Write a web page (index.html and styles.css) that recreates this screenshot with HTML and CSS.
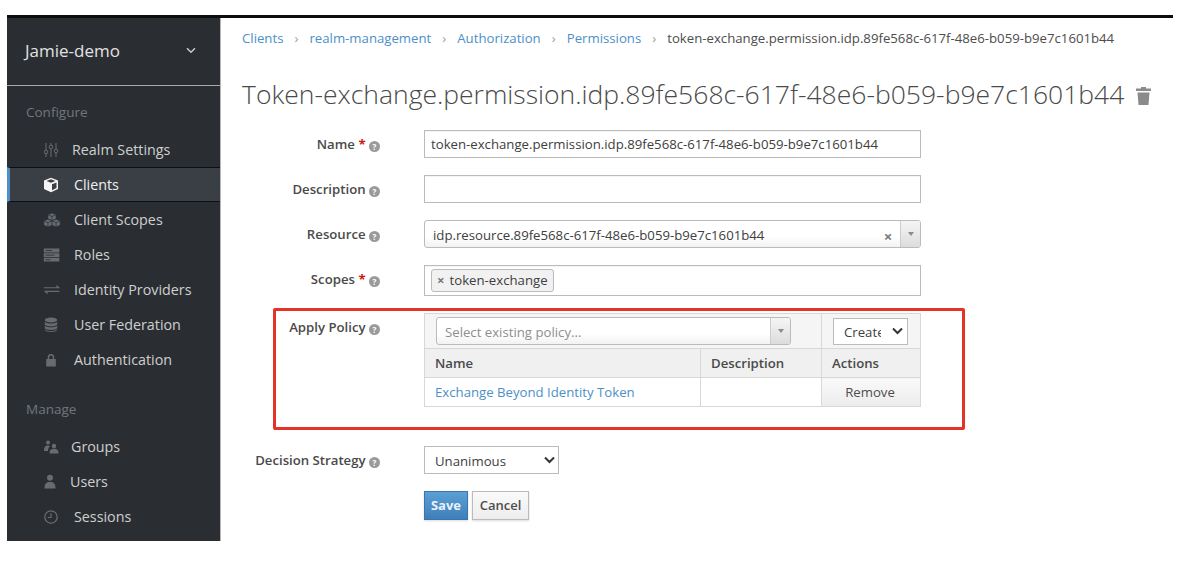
FILE: index.html
```html
<!DOCTYPE html>
<html lang="en">
<head>
  <meta charset="UTF-8">
  <title>Token-exchange permission</title>
  <link rel="stylesheet" href="styles.css">
</head>
<body>
  <div class="shell">
    <aside class="sidebar">
      <div class="realm">
        <span>Jamie-demo</span>
        <svg class="realm-caret" width="10" height="7" viewBox="0 0 10 7"><path d="M1 1.200 5 5.200 9 1.200" fill="none" stroke="currentColor" stroke-width="1.500"/></svg>
      </div>
      <div class="nav-title nav-title-first">Configure</div>
      <a class="nav-item">
        <svg class="nav-icon" viewBox="0 0 16 16"><path d="M3 1v14M8 1v14M13 1v14" stroke="currentColor" stroke-width="1" fill="none"/><circle cx="3" cy="10" r="1.800" fill="#292e34" stroke="currentColor"/><circle cx="8" cy="5" r="1.800" fill="#292e34" stroke="currentColor"/><circle cx="13" cy="9" r="1.800" fill="#292e34" stroke="currentColor"/></svg>
        <span class="nav-label nav-label-realm">Realm Settings</span>
      </a>
      <a class="nav-item active">
        <svg class="nav-icon" viewBox="0 0 16 16"><path d="M8 .8 15 3.500V12L8 15.200 1 12V3.500Z" fill="currentColor"/><path d="M3.500 4 8 5.800 12.500 4 8 2.300ZM9 7.200v6l4.500-2.100V5.400Z" fill="#393f44"/></svg>
        <span class="nav-label">Clients</span>
      </a>
      <a class="nav-item">
        <svg class="nav-icon nav-icon-wide" viewBox="0 0 22 18"><g fill="currentColor" stroke="#292e34" stroke-width=".8"><path d="M11 .5l5 2v5.200l-5 2-5-2V2.500Z"/><path d="M6 8l5 2v5.500l-5 2-5-2V10Z"/><path d="M16 8l5 2v5.500l-5 2-5-2V10Z"/></g><path d="M6.500 2.800 11 4.700l4.500-1.900M11 4.700v4.800M1.500 10.300 6 12.200l4.500-1.900M6 12.200v5M11.500 10.300 16 12.200l4.500-1.900M16 12.200v5" fill="none" stroke="#292e34" stroke-width=".9"/></svg>
        <span class="nav-label">Client Scopes</span>
      </a>
      <a class="nav-item">
        <svg class="nav-icon nav-icon-wide" viewBox="0 0 22 18"><path d="M1 1h19v5H1zM1 7h19v4.500H1zM1 12.500h19V17H1z" fill="currentColor"/><path d="M3 3.500h8M3 9.200h11M3 14.800h6" stroke="#292e34" stroke-width="1"/></svg>
        <span class="nav-label">Roles</span>
      </a>
      <a class="nav-item">
        <svg class="nav-icon nav-icon-wide" viewBox="0 0 22 18"><path d="M1 5.500h15.500V2.500L21 7H1ZM20 11.500H5.500v3L1 10h19Z" fill="currentColor"/></svg>
        <span class="nav-label">Identity Providers</span>
      </a>
      <a class="nav-item">
        <svg class="nav-icon" viewBox="0 0 16 18"><ellipse cx="8" cy="3.300" rx="7" ry="2.800" fill="currentColor"/><path d="M1 5.400c1 2.600 13 2.600 14 0v3c-1 2.600-13 2.600-14 0ZM1 9.600c1 2.600 13 2.600 14 0v3c-1 2.600-13 2.600-14 0ZM1 13.800c1 2.600 13 2.600 14 0v.8c-1 3-13 3-14 0Z" fill="currentColor"/></svg>
        <span class="nav-label">User Federation</span>
      </a>
      <a class="nav-item">
        <svg class="nav-icon" viewBox="0 0 16 16"><path d="M4.800 7V5.200a3.200 3.200 0 0 1 6.400 0V7h1.600v7.500H3.200V7ZM6.300 7h3.400V5.200a1.700 1.700 0 0 0-3.400 0Z" fill="currentColor" fill-rule="evenodd"/></svg>
        <span class="nav-label">Authentication</span>
      </a>
      <div class="nav-title nav-title-manage">Manage</div>
      <a class="nav-item">
        <svg class="nav-icon" viewBox="0 0 16 16"><circle cx="5" cy="3.500" r="2" fill="currentColor"/><path d="M1 12c0-5 2-5.500 4-5.500 1 0 1.500.2 2 .5-1.500 1.500-2 3-2 5Z" fill="currentColor"/><circle cx="11" cy="7" r="2.200" fill="currentColor"/><path d="M6.500 14.500c0-4 2-4.800 4.500-4.800s4.500.8 4.500 4.800Z" fill="currentColor"/></svg>
        <span class="nav-label nav-label-groups">Groups</span>
      </a>
      <a class="nav-item">
        <svg class="nav-icon" viewBox="0 0 16 16"><circle cx="7" cy="3.800" r="3" fill="currentColor"/><path d="M1.500 14.500c0-5 1.800-6.500 5.500-6.500s5.500 1.500 5.500 6.500Z" fill="currentColor"/></svg>
        <span class="nav-label nav-label-users">Users</span>
      </a>
      <a class="nav-item">
        <svg class="nav-icon" viewBox="0 0 16 16"><circle cx="8" cy="8" r="6.200" fill="none" stroke="currentColor" stroke-width="1.300"/><path d="M8 4.200V8.500H4.800" fill="none" stroke="currentColor" stroke-width="1.200"/></svg>
        <span class="nav-label">Sessions</span>
      </a>
    </aside>

    <main class="content">
      <nav class="crumbs">
        <a>Clients</a><span class="sep">›</span>
        <a>realm-management</a><span class="sep">›</span>
        <a>Authorization</a><span class="sep">›</span>
        <a>Permissions</a><span class="sep">›</span>
        <span class="crumb-current">token-exchange.permission.idp.89fe568c-617f-48e6-b059-b9e7c1601b44</span>
      </nav>

      <h1 class="title">
        <span>Token-exchange.permission.idp.89fe568c-617f-48e6-b059-b9e7c1601b44</span>
        <svg class="trash" width="17" height="20" viewBox="0 0 17 20"><path d="M6 2.500V1h5v1.500h5V5H1V2.500ZM2.500 6.500h12L13.500 19h-10Z" fill="currentColor"/></svg>
      </h1>

      <form class="form">
        <div class="row">
          <label class="field-label">Name <b class="req">*</b> <i class="help">?</i></label>
          <div class="control">token-exchange.permission.idp.89fe568c-617f-48e6-b059-b9e7c1601b44</div>
        </div>
        <div class="row">
          <label class="field-label">Description <i class="help">?</i></label>
          <div class="control"></div>
        </div>
        <div class="row">
          <label class="field-label">Resource <i class="help">?</i></label>
          <div class="combo">
            <span class="combo-text">idp.resource.89fe568c-617f-48e6-b059-b9e7c1601b44</span>
            <span class="combo-clear">×</span>
            <span class="combo-arrow"></span>
          </div>
        </div>
        <div class="row">
          <label class="field-label">Scopes <b class="req">*</b> <i class="help">?</i></label>
          <div class="control control-tags"><span class="tag"><span class="tag-x">×</span>token-exchange</span></div>
        </div>
        <div class="row row-policy">
          <label class="field-label">Apply Policy <i class="help">?</i></label>
          <table class="policy">
            <colgroup><col class="col-name"><col class="col-desc"><col class="col-act"></colgroup>
            <tr class="policy-tools">
              <td colspan="2">
                <div class="combo combo-policy">
                  <span class="combo-text combo-placeholder">Select existing policy...</span>
                  <span class="combo-arrow"></span>
                </div>
              </td>
              <td><span class="select select-create"><span class="select-text">Create</span><svg class="chev" width="11" height="8" viewBox="0 0 11 8"><path d="M1 1.500 5.500 6 10 1.500" fill="none" stroke="currentColor" stroke-width="2"/></svg></span></td>
            </tr>
            <tr class="policy-head">
              <th>Name</th><th>Description</th><th>Actions</th>
            </tr>
            <tr class="policy-body">
              <td><a>Exchange Beyond Identity Token</a></td>
              <td></td>
              <td class="remove">Remove</td>
            </tr>
          </table>
          <div class="highlight"></div>
        </div>
        <div class="row row-decision">
          <label class="field-label">Decision Strategy <i class="help">?</i></label>
          <span class="select select-decision"><span class="select-text">Unanimous</span><svg class="chev" width="11" height="8" viewBox="0 0 11 8"><path d="M1 1.500 5.500 6 10 1.500" fill="none" stroke="currentColor" stroke-width="2"/></svg></span>
        </div>
        <div class="row row-buttons">
          <span></span>
          <div class="buttons">
            <button type="button" class="btn btn-save">Save</button>
            <button type="button" class="btn btn-cancel">Cancel</button>
          </div>
        </div>
      </form>
    </main>
  </div>
</body>
</html>
```

FILE: styles.css
```css
* { box-sizing: border-box; }

body {
  margin: 0;
  padding: 15px 21px 0 7px;
  background: #fff;
  font-family: "Open Sans", "Liberation Sans", sans-serif;
  font-size: 13.2px;
  color: #363636;
}

.shell {
  display: flex;
  border-top: 3px solid #0d0d0d;
}

/* sidebar */
.sidebar {
  width: 214px;
  height: 523px;
  flex-shrink: 0;
  background: #2a2e33;
  border-right: 1px solid #b5b5b5;
  color: #d1d1d1;
  font-size: 14.3px;
}
.realm {
  height: 68px;
  padding: 0 24px 2px 18px;
  display: flex;
  align-items: center;
  justify-content: space-between;
  border-bottom: 1px solid #a9a9a9;
  font-size: 17px;
  color: #e2e2e2;
}
.realm-caret { color: #c9c9c9; }
.nav-title {
  padding-left: 19px;
  color: #72767b;
  font-size: 13.5px;
  line-height: 20px;
}
.nav-title-first { margin: 16px 0 10px; }
.nav-title-manage { margin: 22px 0 10px; }
.nav-item {
  height: 35px;
  display: flex;
  align-items: center;
  padding-left: 36px;
  color: #686c71;
}
.nav-item.active {
  background: #393f44;
  border-left: 3px solid #4d90c8;
  border-top: 1px solid #0e0f11;
  border-bottom: 1px solid #0e0f11;
  padding-left: 33px;
  color: #f4f4f4;
}
.nav-icon {
  width: 16px;
  height: 16px;
  flex-shrink: 0;
}
.nav-icon-wide { width: 18px; }
.nav-label {
  margin-left: 15px;
  color: #cfcfcf;
}
.nav-icon-wide + .nav-label { margin-left: 13px; }
.active .nav-label { color: #f0f0f0; }
.nav-label-realm { margin-left: 13px; }
.nav-label-groups { margin-left: 12px; }
.nav-label-users { margin-left: 11px; }

/* main column */
.content {
  flex: 1;
  padding-left: 21px;
}
.crumbs {
  margin-top: 9px;
  line-height: 22px;
  display: flex;
  align-items: center;
  white-space: nowrap;
}
.crumbs a { color: #4d90c8; }
.sep {
  width: 26px;
  text-align: center;
  color: #9c9c9c;
}
.crumb-current { color: #4d4d4d; }
.title {
  margin: 27px 0 0;
  font-size: 26.5px;
  font-weight: 300;
  line-height: 36px;
  color: #4a4a4a;
  display: flex;
  align-items: center;
  gap: 11px;
  white-space: nowrap;
}
.trash { color: #8b8b8b; margin-top: 3px; }

/* form */
.form { margin-top: 18px; }
.row {
  display: grid;
  grid-template-columns: 138px 497px;
  column-gap: 44px;
  align-items: start;
  margin-bottom: 17px;
}
.field-label {
  display: block;
  height: 28px;
  text-align: right;
  font-weight: 600;
  line-height: 29px;
  color: #4a4a4a;
  white-space: nowrap;
}
.req { color: #c9190b; font-weight: 700; }
.help {
  display: inline-block;
  width: 11px;
  height: 11px;
  border-radius: 50%;
  background: #9a9a9a;
  color: #fff;
  font-style: normal;
  font-size: 8px;
  font-weight: 700;
  line-height: 11px;
  text-align: center;
  vertical-align: -1px;
}
.control {
  height: 28px;
  padding: 0 6px;
  border: 1px solid #bbb;
  box-shadow: inset 0 1px 1px rgba(0,0,0,.05);
  line-height: 27px;
  color: #404040;
  white-space: nowrap;
}
.control-tags {
  height: 31px;
  padding: 3px 6px;
}
.tag {
  display: inline-block;
  height: 23px;
  padding: 0 5px 0 4px;
  border: 1px solid #bbb;
  border-radius: 3px;
  background: #f1f1f1;
  line-height: 21px;
  color: #404040;
  vertical-align: top;
}
.tag-x {
  margin: 0 5px 0 1px;
  color: #777;
  font-weight: 700;
}
.combo {
  height: 28px;
  display: flex;
  align-items: center;
  border: 1px solid #bbb;
  border-radius: 3px;
  background: linear-gradient(#fff 60%, #f2f2f2);
  padding-left: 8px;
  color: #404040;
}
.combo-text {
  flex: 1;
  white-space: nowrap;
  padding-top: 2px;
}
.combo-placeholder { color: #8e8e8e; }
.combo-clear {
  width: 18px;
  text-align: center;
  color: #7a7a7a;
  font-size: 15px;
  font-weight: 700;
  margin-top: 3px;
  margin-right: 3px;
}
.combo-arrow {
  width: 20px;
  align-self: stretch;
  border-left: 1px solid #ccc;
  background: linear-gradient(#f5f5f5, #dcdcdc);
  border-radius: 0 2px 2px 0;
  display: flex;
  align-items: center;
  justify-content: center;
}
.combo-arrow::after {
  content: "";
  border: 3px solid transparent;
  border-top: 4px solid #8b8b8b;
  border-bottom: 0;
}

/* apply policy table */
.row-policy {
  position: relative;
  margin-bottom: 39px;
}
.policy {
  width: 496px;
  border-collapse: collapse;
  table-layout: fixed;
  background: #fff;
}
.col-name { width: 276px; }
.col-desc { width: 121px; }
.col-act { width: 99px; }
.policy td, .policy th {
  border: 1px solid #d8d8d8;
  padding: 0 10px;
  text-align: left;
}
.policy-tools td {
  height: 35px;
  padding: 0 11px;
  background: #f5f5f5;
}
.combo-policy { width: 355px; }
.policy-head th {
  height: 29px;
  background: #f0f0f0;
  font-weight: 600;
  color: #4a4a4a;
}
.policy-body td { height: 29px; }
.policy-body a { color: #4d90c8; }
.policy .remove {
  text-align: center;
  padding: 0 2px 0 0;
  background: linear-gradient(#fafafa, #ececec);
  color: #4d4d4d;
}
.highlight {
  position: absolute;
  left: 31px;
  top: -5px;
  width: 692px;
  height: 122px;
  border: 3px solid #e53228;
  border-radius: 2px;
  pointer-events: none;
}
.select {
  display: flex;
  align-items: center;
  height: 28px;
  border: 1px solid #bbb;
  background: #fff;
  color: #404040;
  justify-content: space-between;
}
.select-text {
  overflow: hidden;
  padding-top: 1px;
}
.select-create {
  width: 75px;
  height: 27px;
  padding: 0 2px 0 10px;
}
.select-create .select-text { width: 37px; }
.select-create .chev { margin-right: 2px; }
.select-decision {
  width: 135px;
  padding: 0 3px 0 10px;
}
.chev { color: #333; }

/* buttons */
.buttons {
  display: flex;
  gap: 4px;
}
.btn {
  height: 29px;
  padding: 0 0 2px;
  border: 1px solid #bbb;
  background: linear-gradient(#fafafa, #ededed);
  box-shadow: 0 1px 2px rgba(0,0,0,.15);
  font: 600 13px "Open Sans", "Liberation Sans", sans-serif;
  color: #4d4d4d;
}
.btn-cancel { width: 57px; }
.btn-save {
  width: 44px;
  background: linear-gradient(#5b9fd6, #3f7fb9);
  border-color: #3a76ad;
  color: #e9f2fa;
  font-weight: 700;
}
```
